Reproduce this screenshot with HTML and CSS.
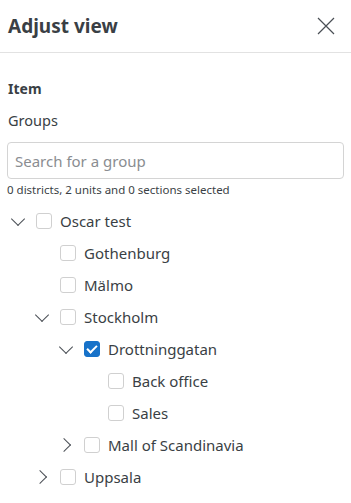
FILE: index.html
```html
<!DOCTYPE html>
<html lang="en">

<head>
    <meta charset="UTF-8">
    <meta name="viewport" content="width=device-width, initial-scale=1.0">
    <title>Adjust view</title>
    <link rel="stylesheet" href="styles.css">
</head>

<body>
    <div class="panel">
        <div class="panel__header">
            <h1>Adjust view</h1>
            <button class="close" type="button" aria-label="Close">
                <svg width="18" height="18" viewBox="0 0 18 18"><path d="M1 1L17 17M17 1L1 17" stroke="#4a4f55" stroke-width="1.2" fill="none"/></svg>
            </button>
        </div>

        <div class="panel__body">
            <h2>Item</h2>
            <label for="search">Groups</label>
            <input type="text" id="search" placeholder="Search for a group">
            <p class="hint">0 districts, 2 units and 0 sections selected</p>

            <ul class="tree">
                <li class="row lvl0"><span class="chev down"></span><span class="box"></span>Oscar test</li>
                <li class="row lvl1"><span class="chev"></span><span class="box"></span>Gothenburg</li>
                <li class="row lvl1"><span class="chev"></span><span class="box"></span>Mälmo</li>
                <li class="row lvl1"><span class="chev down"></span><span class="box"></span>Stockholm</li>
                <li class="row lvl2"><span class="chev down"></span><span class="box checked"></span>Drottninggatan</li>
                <li class="row lvl3"><span class="chev"></span><span class="box"></span>Back office</li>
                <li class="row lvl3"><span class="chev"></span><span class="box"></span>Sales</li>
                <li class="row lvl2"><span class="chev right"></span><span class="box"></span>Mall of Scandinavia</li>
                <li class="row lvl1"><span class="chev right"></span><span class="box"></span>Uppsala</li>
            </ul>
        </div>
    </div>
</body>

</html>
```
FILE: styles.css
```css
/* styles.css */

body {
    font-family: "Noto Sans", Arial, sans-serif;
    margin: 0;
    padding: 0;
    background-color: #fff;
    color: #3a3f45;
}

.panel__header {
    height: 52px;
    display: flex;
    align-items: center;
    justify-content: space-between;
    padding: 0 8px;
    border-bottom: 1px solid #e2e2e2;
}

h1 {
    margin: 0;
    font-size: 19px;
    font-weight: 700;
    color: #3a3f45;
}

.close {
    background: none;
    border: none;
    padding: 0;
    margin-right: 8px;
    width: 18px;
    height: 18px;
    cursor: pointer;
}

.panel__body {
    padding: 24px 7px 0 7px;
}

h2 {
    margin: 0 1px;
    font-size: 14px;
    font-weight: 700;
    line-height: 24px;
}

label {
    display: block;
    margin: 9px 1px 12px;
    font-size: 14.5px;
    line-height: 20px;
}

input {
    width: 100%;
    height: 37px;
    padding: 0 7px;
    border: 1px solid #d4d4d4;
    border-radius: 4px;
    box-sizing: border-box;
    font-family: inherit;
    font-size: 15px;
    color: #3a3f45;
}

input::placeholder {
    color: #8a8d91;
}

.hint {
    margin: 3px 0 7px;
    font-size: 11.5px;
    line-height: 16px;
}

.tree {
    list-style: none;
    margin: 0;
    padding: 0;
}

.row {
    height: 32px;
    display: flex;
    align-items: center;
    font-size: 15px;
}

.lvl0 { padding-left: 1px; }
.lvl1 { padding-left: 25px; }
.lvl2 { padding-left: 49px; }
.lvl3 { padding-left: 73px; }

.chev {
    width: 20px;
    height: 20px;
    margin-right: 8px;
    position: relative;
}

.chev.down::before,
.chev.right::before {
    content: "";
    position: absolute;
    width: 9px;
    height: 9px;
    border-right: 1px solid #4a4f55;
    border-bottom: 1px solid #4a4f55;
}

.chev.down::before {
    left: 5px;
    top: 3px;
    transform: rotate(45deg);
}

.chev.right::before {
    left: 3px;
    top: 5px;
    transform: rotate(-45deg);
}

.box {
    width: 16px;
    height: 16px;
    border: 1px solid #d0d0d0;
    border-radius: 3px;
    box-sizing: border-box;
    margin-right: 8px;
    position: relative;
}

.box.checked {
    background-color: #1772c9;
    border-color: #1772c9;
}

.box.checked::after {
    content: "";
    position: absolute;
    left: 4px;
    top: 1px;
    width: 4px;
    height: 8px;
    border-right: 2.5px solid #fff;
    border-bottom: 2.5px solid #fff;
    transform: rotate(45deg);
}
```
